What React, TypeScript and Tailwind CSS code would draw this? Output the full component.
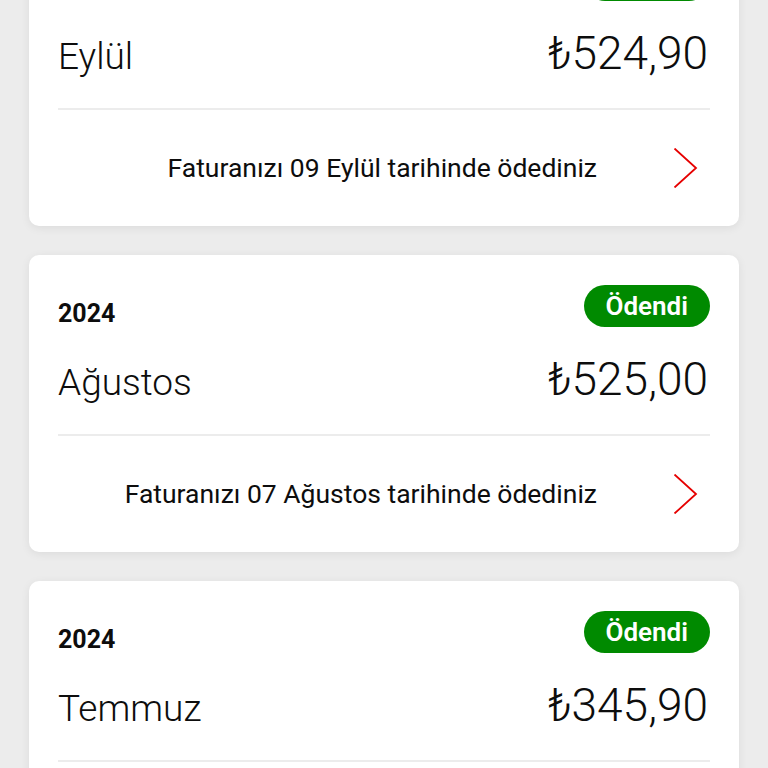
const bills = [
  { year: "2024", month: "Eylül", amount: "₺524,90", note: "Faturanızı 09 Eylül tarihinde ödediniz" },
  { year: "2024", month: "Ağustos", amount: "₺525,00", note: "Faturanızı 07 Ağustos tarihinde ödediniz" },
  { year: "2024", month: "Temmuz", amount: "₺345,90", note: "Faturanızı 08 Temmuz tarihinde ödediniz" },
];

function Chevron() {
  return (
    <svg width="40" height="40" viewBox="0 0 40 40" className="mr-[5px] shrink-0" aria-hidden="true">
      <path d="M9.5 0.5 L31 20 L9.5 39.5" fill="none" stroke="#e60000" strokeWidth="1.8" strokeLinejoin="miter" />
    </svg>
  );
}

function BillCard({ year, month, amount, note }: (typeof bills)[number]) {
  return (
    <div className="rounded-[10px] bg-white px-[29px] pt-[30px] shadow-[0_2px_10px_rgba(0,0,0,0.07)]">
      <div className="flex h-[42px] items-end justify-between">
        <span className="mb-[1px] text-[25px] leading-none font-bold text-[#0d0d0d]">{year}</span>
        <span className="flex h-[42px] items-center rounded-full bg-[#008a00] px-[22px] text-[26px] leading-none font-semibold text-white">
          Ödendi
        </span>
      </div>
      <div className="mt-[29px] flex items-baseline justify-between">
        <span className="text-[37px] leading-none font-light text-[#0d0d0d]">{month}</span>
        <span className="mr-[2px] text-[46px] leading-none font-light text-[#0d0d0d]">{amount}</span>
      </div>
      <div className="mt-[32px] h-[2px] bg-[#ececec]" />
      <div className="flex h-[116px] items-center justify-end gap-[68px]">
        <span className="text-[26.5px] leading-none text-[#0d0d0d]">{note}</span>
        <Chevron />
      </div>
    </div>
  );
}

export default function App() {
  return (
    <div
      className="h-[768px] overflow-hidden bg-[#ececec]"
      style={{ fontFamily: "Roboto, 'Liberation Sans', sans-serif" }}
    >
      <div className="-mt-[71px] flex flex-col gap-[29px] px-[29px]">
        {bills.map((b) => (
          <BillCard key={b.month} {...b} />
        ))}
      </div>
    </div>
  );
}
